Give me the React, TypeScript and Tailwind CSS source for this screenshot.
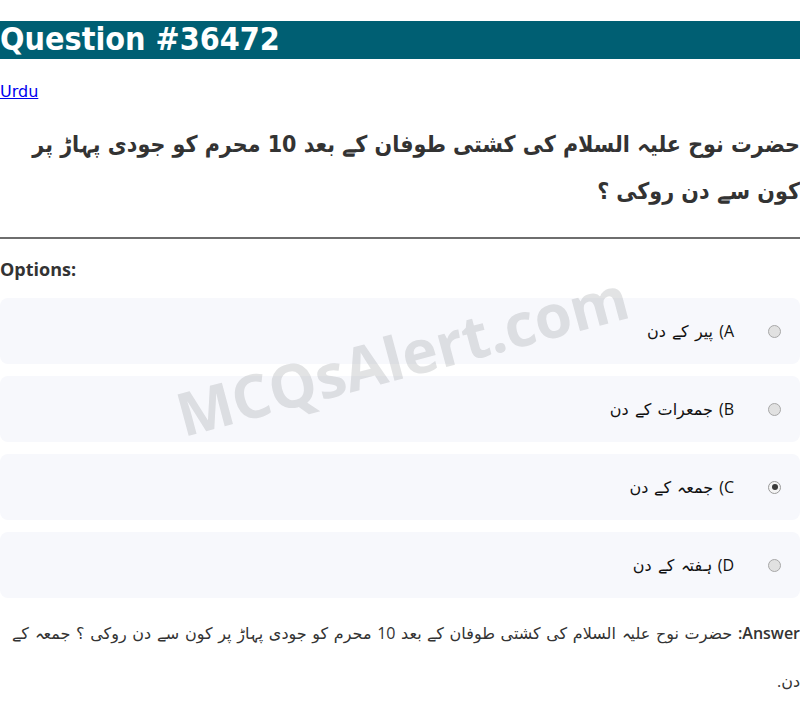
import React from "react";

const options = [
  { label: "A) پیر کے دن", checked: false },
  { label: "B) جمعرات کے دن", checked: false },
  { label: "C) جمعہ کے دن", checked: true },
  { label: "D) ہفتہ کے دن", checked: false },
];

function Radio({ checked }: { checked: boolean }) {
  return checked ? (
    <span className="flex h-[13px] w-[13px] shrink-0 items-center justify-center rounded-full border border-[#9a9a9a] bg-[#f4f4f4]">
      <span className="h-[6px] w-[6px] rounded-full bg-[#3a3a3a]" />
    </span>
  ) : (
    <span className="h-[13px] w-[13px] shrink-0 rounded-full border border-[#a8a8a8] bg-[#e1e1e1]" />
  );
}

export default function App() {
  return (
    <div className="relative min-h-[705px] overflow-hidden bg-white font-['DejaVu_Sans',sans-serif] text-[#333]">
      <h1 className="mt-[21.44px] mb-[21.44px] bg-[#005f73] text-[32px] font-bold leading-[37.25px] text-white font-stretch-condensed">
        Question #36472
      </h1>
      <div className="text-[16px] leading-[24px]">
        <a href="#" className="text-[#0000ee] underline">
          Urdu
        </a>
      </div>
      <p dir="rtl" className="mt-[16.5px] text-[23px] font-bold leading-[47px] text-[#333] font-stretch-condensed">
        حضرت نوح علیہ السلام کی کشتی طوفان کے بعد 10 محرم کو جودی پہاڑ پر کون سے دن روکی ؟
      </p>
      <hr className="mt-[22px] border-0 border-t-2 border-[#6e6e6e]" />
      <h3 className="mt-[18px] font-['Open_Sans',sans-serif] text-[18px] font-bold leading-[24.5px] text-[#333]">
        Options:
      </h3>
      <div className="mt-[17px] flex flex-col gap-[12px]">
        {options.map((o) => (
          <div
            key={o.label}
            dir="rtl"
            className="flex h-[66px] items-center gap-[34px] rounded-[8px] bg-[#f7f8fc] pr-[19px]"
          >
            <Radio checked={o.checked} />
            <span className="font-['Open_Sans','DejaVu_Sans',sans-serif] text-[16px] text-[#111] [word-spacing:2px]">
              {o.label}
            </span>
          </div>
        ))}
      </div>
      <p dir="rtl" className="mt-[11px] font-['Open_Sans','DejaVu_Sans',sans-serif] text-[16px] leading-[48px] text-[#333] [word-spacing:1.5px]">
        <strong className="font-semibold">Answer:</strong> حضرت نوح علیہ السلام کی کشتی طوفان کے بعد 10 محرم کو جودی پہاڑ پر کون سے دن روکی ؟ جمعہ کے دن.
      </p>
      <div className="pointer-events-none absolute left-[402px] top-[355px] -translate-x-1/2 -translate-y-1/2 -rotate-[15deg] whitespace-nowrap font-['Open_Sans',sans-serif] text-[60px] font-bold text-[rgba(140,142,148,0.25)]">
        MCQsAlert.com
      </div>
    </div>
  );
}
